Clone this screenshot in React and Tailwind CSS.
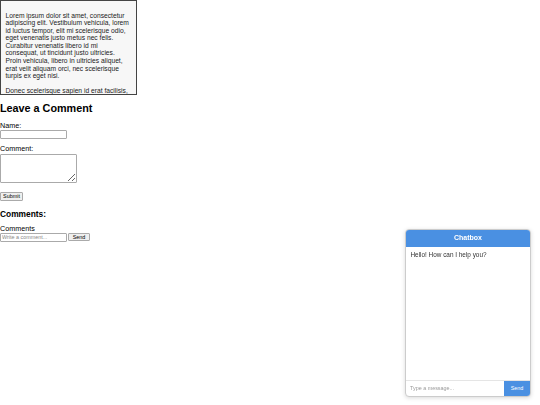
import { useState } from 'react'

const lorem =
  'Lorem ipsum dolor sit amet, consectetur adipiscing elit. Vestibulum vehicula, lorem id luctus tempor, elit mi scelerisque odio, eget venenatis justo metus nec felis. Curabitur venenatis libero id mi consequat, ut tincidunt justo ultricies. Proin vehicula, libero in ultricies aliquet, erat velit aliquam orci, nec scelerisque turpis ex eget nisi.'
const lorem2 =
  'Donec scelerisque sapien id erat facilisis, a placerat lacus tincidunt. Aenean vitae tortor at metus ultricies vehicula. Sed sed turpis nec lorem dapibus feugiat.'

const Chatbox = () => {
  const [msg, setMsg] = useState('')

  return (
    <div className="fixed right-[9px] bottom-[8px] w-[126px] h-[168px] flex flex-col bg-white border border-[#ccc] rounded-[4px] shadow-[0_1px_4px_rgba(0,0,0,0.15)] overflow-hidden">
      <div className="h-[17px] bg-[#4a90e2] text-white font-bold text-[7px] flex items-center justify-center">
        Chatbox
      </div>
      <div className="flex-1 px-[4.5px] pt-[4px] text-[6.4px] leading-[7.5px] text-[#333]">
        Hello! How can I help you?
      </div>
      <div className="flex h-[16px] border-t border-[#e5e5e5]">
        <input
          value={msg}
          onChange={(e) => setMsg(e.target.value)}
          placeholder="Type a message..."
          className="flex-1 min-w-0 px-[4px] text-[5.4px] outline-none placeholder:text-[#999]"
        />
        <button className="w-[26px] bg-[#4a90e2] text-white text-[5.4px]">Send</button>
      </div>
    </div>
  )
}

export default function App() {
  return (
    <div className="min-h-[405px] bg-white text-black font-['Liberation_Sans',Arial,sans-serif]">
      <div className="w-[137px] h-[95px] overflow-hidden border border-[#444] bg-[#f7f7f7] px-[4.5px] text-[6.7px] leading-[7.6px] text-[#222]">
        <p className="mt-[10.5px]">{lorem}</p>
        <p className="mt-[7.6px]">{lorem2}</p>
      </div>

      <h2 className="mt-[7px] text-[10.8px] leading-[12px] font-bold">Leave a Comment</h2>

      <form className="flex flex-col items-start text-[7.2px] leading-[8px] text-black" onSubmit={(e) => e.preventDefault()}>
        <label className="mt-[8px] text-black">Name:</label>
        <input className="w-[67px] h-[9px] border border-[#aaa] rounded-[1px]" />
        <label className="mt-[6px] text-black">Comment:</label>
        <textarea className="mt-[1px] w-[77px] h-[29px] border border-[#aaa] rounded-[1px] resize" />
        <button className="mt-[9px] w-[23px] h-[8.5px] border border-[#aaa] rounded-[1px] bg-[#efefef] text-[5.4px] leading-[6px]">
          Submit
        </button>
      </form>

      <h3 className="mt-[9px] text-[8.4px] leading-[9.5px] font-bold">Comments:</h3>
      <div className="mt-[5.5px] text-[7.2px] leading-[8px]">Comments</div>
      <div className="flex items-center gap-[1px]">
        <input
          placeholder="Write a comment..."
          className="w-[67px] h-[9px] border border-[#aaa] rounded-[1px] px-[1px] text-[5.4px] placeholder:text-[#888]"
        />
        <button className="w-[22px] h-[8.5px] border border-[#aaa] rounded-[1px] bg-[#efefef] text-[5.4px] leading-[6px]">
          Send
        </button>
      </div>

      <Chatbox />
    </div>
  )
}
